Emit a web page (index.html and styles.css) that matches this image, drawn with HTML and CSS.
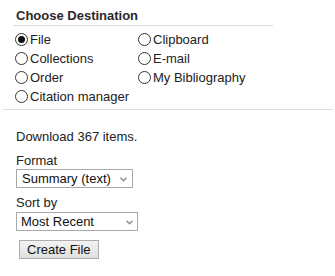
FILE: index.html
```html
<!DOCTYPE html>
<html lang="en">
<head>
    <meta charset="UTF-8">
    <title>Send to</title>
    <link rel="stylesheet" href="styles.css">
</head>
<body>
    <div class="dest">
        <h2>Choose Destination</h2>
        <div class="options">
            <label class="opt"><input type="radio" name="dest" checked><span>File</span></label>
            <label class="opt"><input type="radio" name="dest"><span>Clipboard</span></label>
            <label class="opt"><input type="radio" name="dest"><span>Collections</span></label>
            <label class="opt"><input type="radio" name="dest"><span>E-mail</span></label>
            <label class="opt"><input type="radio" name="dest"><span>Order</span></label>
            <label class="opt"><input type="radio" name="dest"><span>My Bibliography</span></label>
            <label class="opt"><input type="radio" name="dest"><span>Citation manager</span></label>
        </div>
    </div>

    <div class="file-panel">
        <p class="count">Download 367 items.</p>
        <label class="field-label" for="format">Format</label>
        <div class="select-wrap format">
            <select id="format">
                <option>Summary (text)</option>
            </select>
            <svg class="chev" width="7" height="5" viewBox="0 0 7 5"><path d="M0.5 0.8 L3.5 3.8 L6.5 0.8" fill="none" stroke="#888" stroke-width="1.3"/></svg>
        </div>
        <label class="field-label" for="sort">Sort by</label>
        <div class="select-wrap sort">
            <select id="sort">
                <option>Most Recent</option>
            </select>
            <svg class="chev" width="7" height="5" viewBox="0 0 7 5"><path d="M0.5 0.8 L3.5 3.8 L6.5 0.8" fill="none" stroke="#888" stroke-width="1.3"/></svg>
        </div>
        <button class="create">Create File</button>
    </div>
</body>
</html>
```

FILE: styles.css
```css
body {
    margin: 0;
    background: #fff;
    color: #222;
    font-family: "Liberation Sans", Arial, sans-serif;
    font-size: 13px;
}

h2 {
    margin: 0;
    width: 257px;
    padding: 8px 0 2px 3px;
    font-size: 13px;
    line-height: 15px;
    font-weight: bold;
    color: #2a2a2a;
    border-bottom: 1px solid #ddd;
}

.dest {
    padding-bottom: 3px;
    border-bottom: 1px solid #ddd;
    margin: 0 2px 0 3px;
}

.dest h2 {
    margin-left: 10px;
}

.options {
    margin: 4px 0 0 12px;
    display: grid;
    grid-template-columns: 123px auto;
    grid-auto-rows: 19px;
}

.opt {
    display: flex;
    align-items: center;
    gap: 2px;
}

.opt input {
    appearance: none;
    margin: 0;
    width: 13px;
    height: 13px;
    border: 1px solid #333;
    border-radius: 50%;
    background: #fff;
    position: relative;
}

.opt input:checked::after {
    content: "";
    position: absolute;
    left: 2px;
    top: 2px;
    width: 7px;
    height: 7px;
    border-radius: 50%;
    background: #111;
}

.file-panel {
    padding: 19px 0 0 16px;
}

.count {
    margin: 0 0 8px;
    line-height: 16px;
}

.field-label {
    display: block;
    line-height: 16px;
}

.select-wrap {
    position: relative;
    height: 19px;
}

.select-wrap select {
    appearance: none;
    margin: 0;
    height: 19px;
    border: 1px solid #a9a9a9;
    border-radius: 0;
    background: #fff;
    color: #111;
    font-family: inherit;
    font-size: 13px;
    padding: 0 0 0 5px;
}

.format {
    margin-bottom: 7px;
}

.format select {
    width: 117px;
}

.sort {
    margin-top: 1px;
}

.sort select {
    width: 122px;
    padding-left: 4px;
}

.chev {
    position: absolute;
    top: 8px;
}

.format .chev {
    left: 104px;
}

.sort .chev {
    left: 110px;
}

.create {
    display: block;
    margin: 9px 0 0 3px;
    height: 19px;
    padding: 0 7px;
    border: 1px solid #adadad;
    border-radius: 0;
    background: linear-gradient(#f2f2f2, #e0e0e0);
    color: #111;
    font-family: inherit;
    font-size: 13px;
}
```
